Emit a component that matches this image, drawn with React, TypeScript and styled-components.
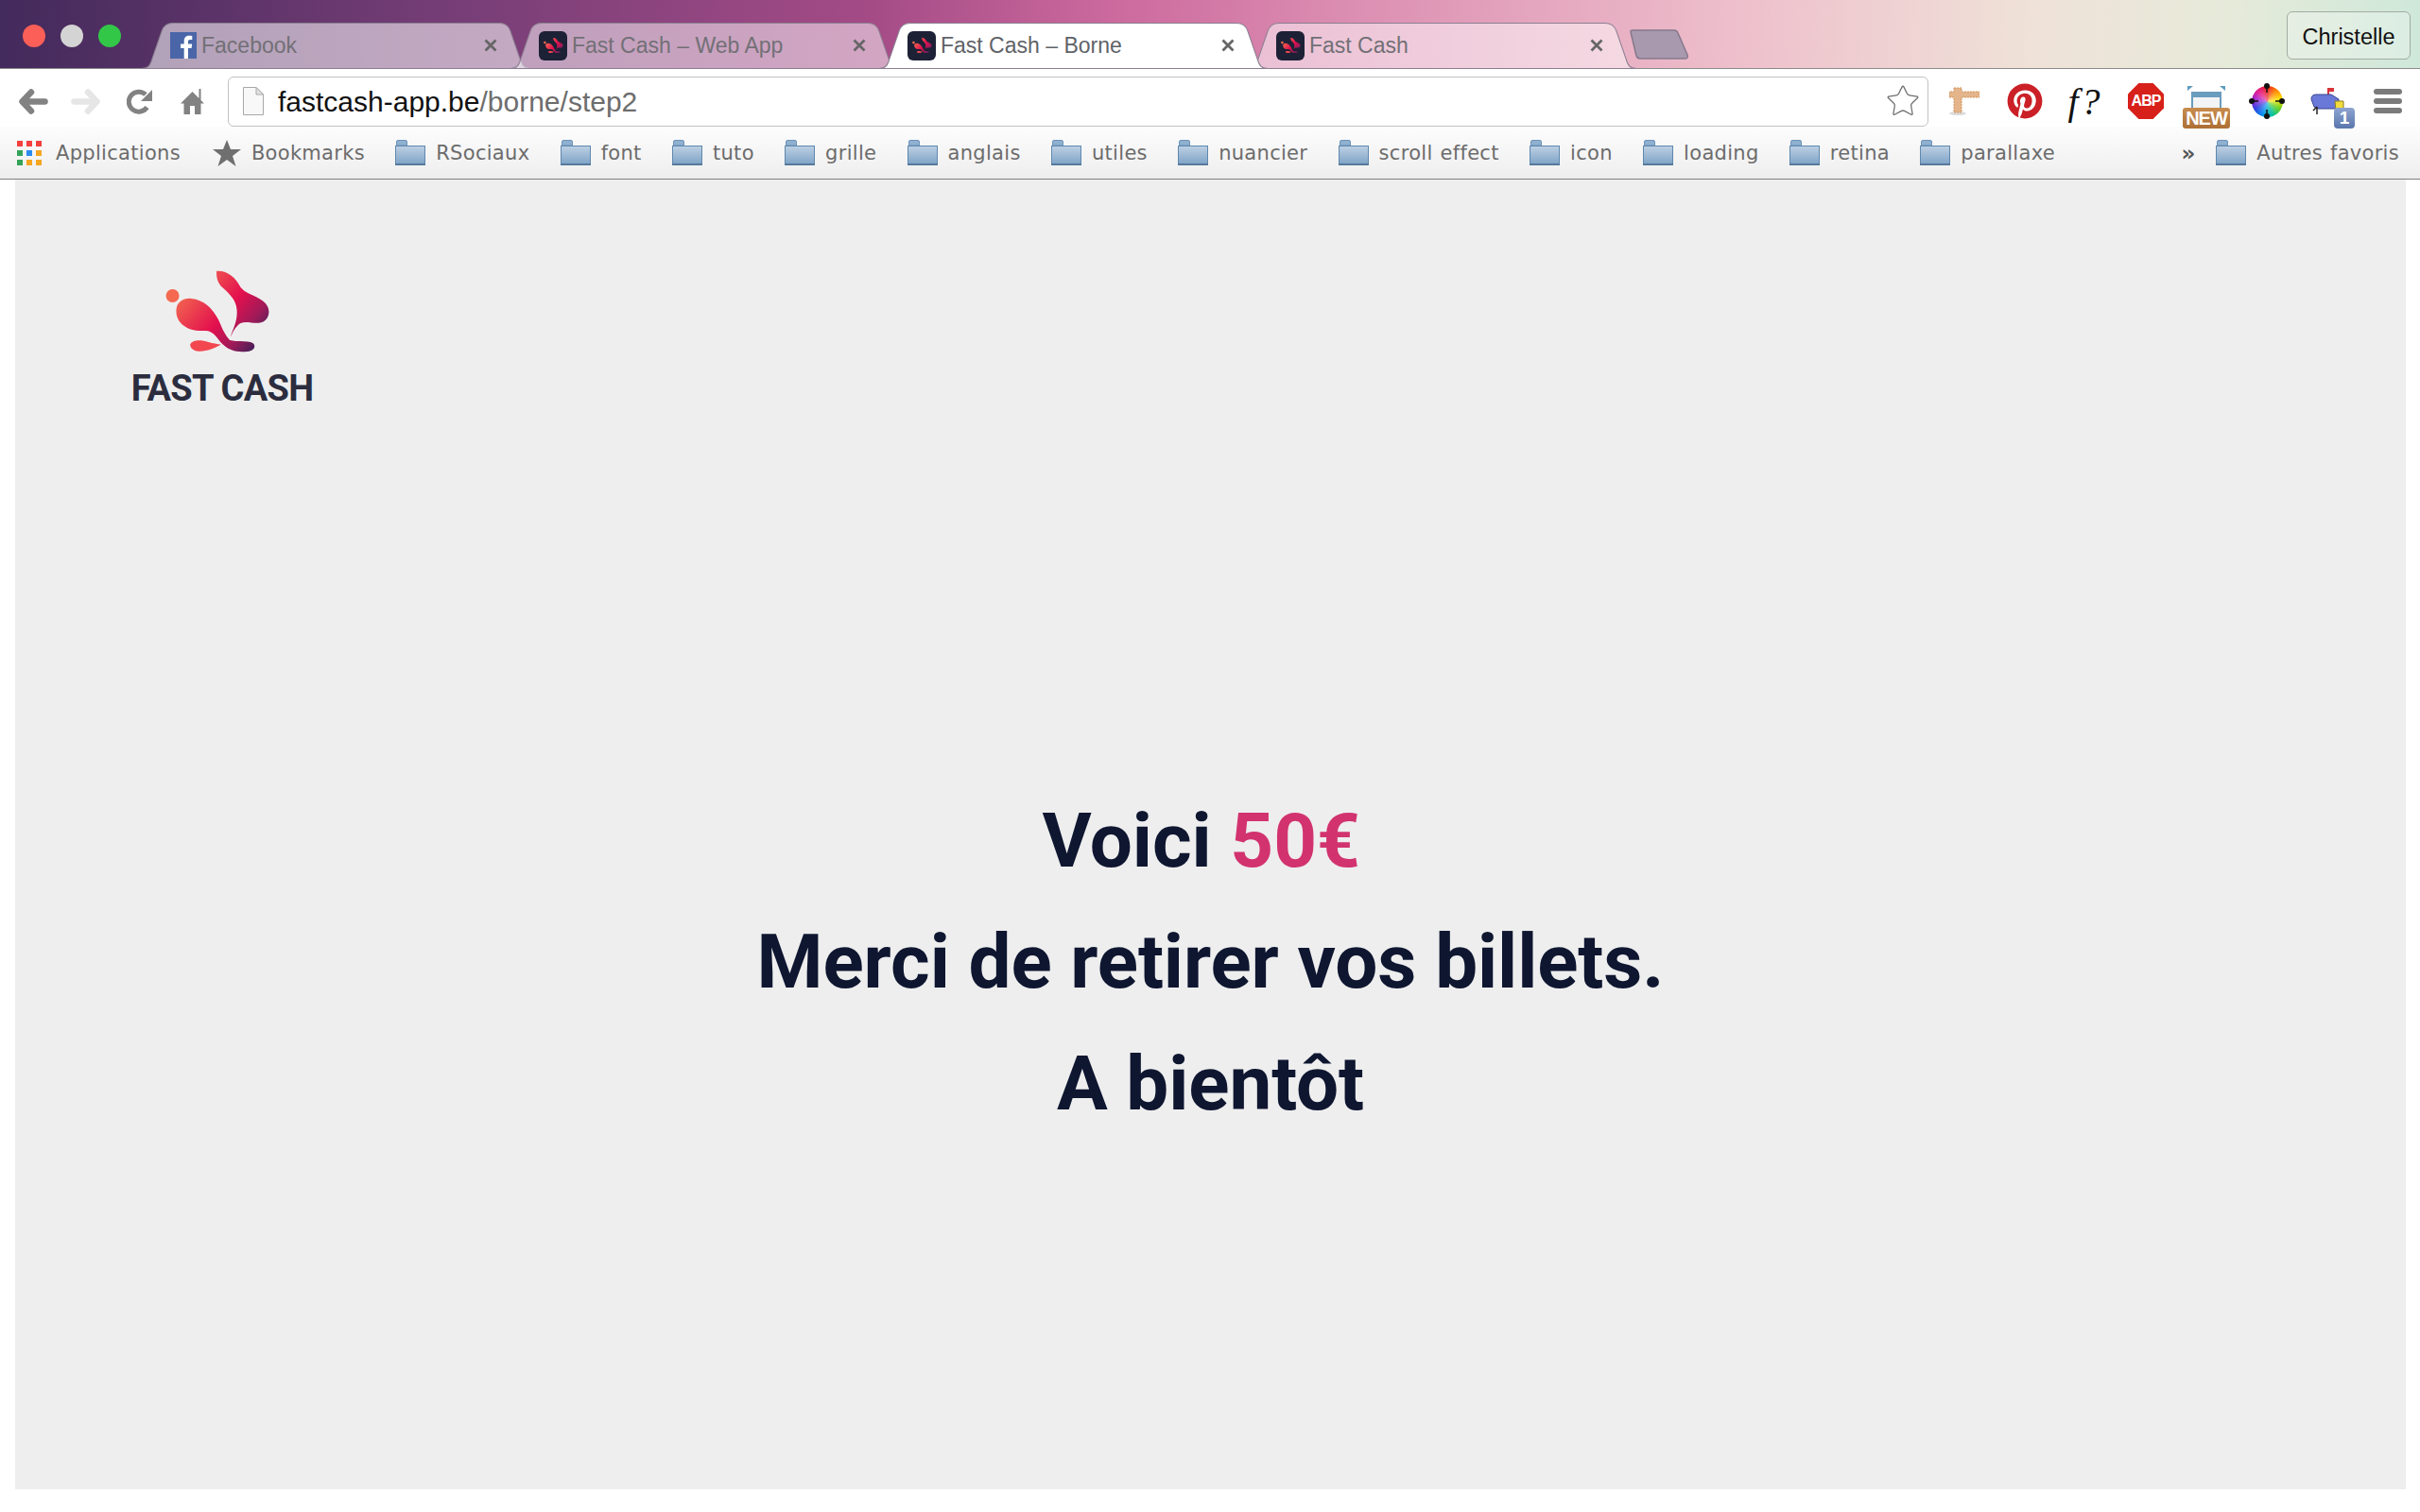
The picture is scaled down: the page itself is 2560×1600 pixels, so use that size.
import { useId } from "react";
import styled, { createGlobalStyle } from "styled-components";
import { FaPinterest } from "react-icons/fa";
import { Star } from "lucide-react";

const GlobalStyle = createGlobalStyle`
  html, body { margin: 0; padding: 0; background: #ffffff; }
  * { box-sizing: border-box; }
`;

const Window = styled.div`
  display: flex;
  flex-direction: column;
  width: 2560px;
  height: 1600px;
  background: #ffffff;
  overflow: hidden;
`;

const TabBar = styled.div`
  display: flex;
  align-items: flex-end;
  height: 73px;
  flex-shrink: 0;
  border-bottom: 1px solid #8c8a8c;
  background: linear-gradient(93deg, #432a5c 0%, #7a3f78 20%, #a44b86 36%, #cc6a9e 46%, #dc8fb2 56%, #eec0cc 72%, #efe2d8 84%, #e6ead9 92%, #cee8da 100%);
`;

const Lights = styled.div`
  display: flex;
  gap: 16px;
  align-self: flex-start;
  margin: 26px 22px 0 24px;
`;

const Light = styled.span<{ $color: string }>`
  width: 24px;
  height: 24px;
  border-radius: 50%;
  background: ${(p) => p.$color};
`;

const Tab = styled.div<{ $active?: boolean }>`
  position: relative;
  display: flex;
  align-items: center;
  width: 411px;
  height: 49px;
  margin-right: -21px;
  margin-bottom: -1px;
  padding: 0 34px 1px 30px;
  z-index: ${(p) => (p.$active ? 2 : 1)};
`;

const TabShape = styled.svg`
  position: absolute;
  inset: 0;
  width: 100%;
  height: 100%;
`;

const TabFavicon = styled.span`
  position: relative;
  display: flex;
  flex-shrink: 0;
  margin-right: 5px;
`;

const TabTitle = styled.span<{ $active?: boolean }>`
  position: relative;
  flex: 1;
  font-family: "Liberation Sans", sans-serif;
  font-size: 23px;
  color: ${(p) => (p.$active ? "#5f6368" : "#727076")};
`;

const TabClose = styled.svg`
  position: relative;
  flex-shrink: 0;
  width: 16px;
  height: 16px;
`;

const FaviconBox = styled.span`
  display: flex;
  align-items: center;
  justify-content: center;
  width: 30px;
  height: 31px;
  border-radius: 6px;
  background: #1d2136;
`;

const NewTab = styled.svg`
  width: 64px;
  height: 32px;
  margin: 0 0 9px 13px;
`;

const ProfileButton = styled.div`
  align-self: flex-start;
  display: flex;
  align-items: center;
  justify-content: center;
  width: 131px;
  height: 51px;
  margin: 12px 10px 0 auto;
  padding-top: 3px;
  border: 1px solid #a2aca4;
  border-radius: 6px;
  background: rgba(255, 255, 255, 0.25);
  font-family: "Liberation Sans", sans-serif;
  font-size: 23.5px;
  color: #111111;
`;

const Toolbar = styled.div`
  display: flex;
  align-items: center;
  height: 61px;
  flex-shrink: 0;
  padding: 7px 0 0 20px;
  background: #ffffff;
`;

const NavIcon = styled.svg<{ $gap: number }>`
  flex-shrink: 0;
  margin-right: ${(p) => p.$gap}px;
`;

const Omnibox = styled.div`
  display: flex;
  align-items: center;
  width: 1799px;
  height: 53px;
  padding: 0 7px 0 15px;
  border: 1.5px solid #c2c2c2;
  border-radius: 6px;
  background: #ffffff;
`;

const Address = styled.div`
  flex: 1;
  margin-left: 15px;
  padding-top: 2px;
  font-family: "Liberation Sans", sans-serif;
  font-size: 30px;
  color: #111111;
`;

const AddressPath = styled.span`
  color: #6d6d6d;
`;

const Extensions = styled.div`
  display: flex;
  margin-left: 6px;
`;

const ExtSlot = styled.div`
  position: relative;
  display: flex;
  align-items: center;
  justify-content: center;
  width: 64px;
  height: 50px;
`;

const FormulaIcon = styled.span`
  font-family: "Liberation Serif", serif;
  font-style: italic;
  font-size: 40px;
  letter-spacing: 3px;
  color: #111111;
`;

const AbpOctagon = styled.div`
  display: flex;
  align-items: center;
  justify-content: center;
  width: 38px;
  height: 38px;
  background: #d7201a;
  clip-path: polygon(30% 0, 70% 0, 100% 30%, 100% 70%, 70% 100%, 30% 100%, 0 70%, 0 30%);
  font-family: "Liberation Sans", sans-serif;
  font-weight: 700;
  font-size: 16px;
  letter-spacing: -1px;
  color: #ffffff;
`;

const NewBadge = styled.span`
  position: absolute;
  left: 7px;
  top: 32px;
  width: 50px;
  height: 22px;
  border-radius: 3px;
  background: linear-gradient(#c88c4e, #ad6f35);
  font-family: "Liberation Sans", sans-serif;
  font-weight: 700;
  font-size: 20px;
  letter-spacing: -1px;
  line-height: 22px;
  text-align: center;
  color: #ffffff;
`;

const Wheel = styled.div`
  position: relative;
  width: 33px;
  height: 33px;
  border-radius: 50%;
  background: radial-gradient(rgba(255, 255, 255, 0.45), rgba(255, 255, 255, 0) 65%),
    conic-gradient(#e81c1c, #ff8a00, #ffe600, #66d020, #00c0a0, #0090f0, #3040e0, #a020d0, #e81c8c, #e81c1c);
`;

const WheelTicks = styled.svg`
  position: absolute;
  left: -3.5px;
  top: -3.5px;
`;

const CountBadge = styled.span`
  position: absolute;
  left: 39px;
  top: 32px;
  width: 22px;
  height: 22px;
  border-radius: 4px;
  background: linear-gradient(#8ea4d0, #5a76ac);
  font-family: "Liberation Sans", sans-serif;
  font-weight: 700;
  font-size: 19px;
  line-height: 22px;
  text-align: center;
  color: #ffffff;
`;

const Burger = styled.div`
  display: flex;
  flex-direction: column;
  gap: 4px;
  width: 30px;
`;

const BurgerBar = styled.span`
  height: 6px;
  border-radius: 3px;
  background: #7b7b7b;
`;

const BookmarkBar = styled.div`
  display: flex;
  align-items: center;
  height: 56px;
  flex-shrink: 0;
  padding: 0 22px 0 18px;
  border-bottom: 1.5px solid #7f7f7f;
  background: linear-gradient(#fdfdfd, #eeeeee);
`;

const Bookmark = styled.div<{ $gap?: number }>`
  display: flex;
  align-items: center;
  gap: 11px;
  margin-right: ${(p) => p.$gap ?? 32.3}px;
`;

const BookmarkLabel = styled.span`
  font-family: "DejaVu Sans", sans-serif;
  font-size: 21px;
  letter-spacing: 0.3px;
  word-spacing: 1px;
  color: #6c6c6c;
  white-space: nowrap;
`;

const AppGrid = styled.div`
  display: grid;
  grid-template-columns: repeat(3, 6px);
  grid-auto-rows: 6px;
  gap: 4px;
  margin-right: 4px;
`;

const AppCell = styled.span<{ $color: string }>`
  background: ${(p) => p.$color};
`;

const Chevron = styled.span`
  margin-left: auto;
  margin-right: 22px;
  font-family: "DejaVu Sans", sans-serif;
  font-weight: 700;
  font-size: 23px;
  color: #555555;
`;

const Page = styled.main`
  flex: 1;
  display: flex;
  flex-direction: column;
  margin: 0 15px 24px 16px;
  padding: 96px 0 0 122px;
  background: #eeeeee;
`;

const Logo = styled.div`
  display: flex;
  flex-direction: column;
  align-items: center;
  width: 194px;
`;

const LogoMark = styled.div`
  display: flex;
  margin-right: 10px;
`;

const LogoText = styled.div`
  margin-top: 22px;
  font-family: Roboto, sans-serif;
  font-weight: 700;
  font-size: 38px;
  line-height: 32px;
  letter-spacing: -0.7px;
  white-space: nowrap;
  color: #2b2d3f;
`;

const Message = styled.div`
  margin: 399px 0 0 -122px;
  text-align: center;
  font-family: Roboto, sans-serif;
  font-weight: 700;
  font-size: 80px;
  line-height: 128.5px;
  letter-spacing: -0.1px;
  color: #0e1630;
`;

const Amount = styled.span`
  color: #d2336f;
`;

const Bunny = ({ size }: { size: number }) => {
  const id = useId();
  return (
    <svg width={size} height={size * 0.78} viewBox="190 76 332 260">
      <defs>
        <linearGradient id={id} gradientUnits="userSpaceOnUse" x1="230" y1="110" x2="480" y2="320">
          <stop offset="0" stopColor="#f57a50" />
          <stop offset="0.55" stopColor="#e3104e" />
          <stop offset="0.8" stopColor="#a01a58" />
          <stop offset="1" stopColor="#43205a" />
        </linearGradient>
      </defs>
      <circle cx="212" cy="157" r="21" fill="#f4694f" />
      <path
        fill={`url(#${id})`}
        d="M224 200C226 176 248 163 272 166C312 170 340 198 358 234C368 256 376 280 394 298C418 304 452 298 468 308C478 318 470 332 450 334C420 338 392 332 372 312C352 292 344 266 312 268C264 272 220 246 224 200Z"
      />
      <path
        fill={`url(#${id})`}
        d="M352 78C388 76 412 100 426 126C438 150 474 154 500 174C524 192 524 226 500 240C478 250 450 236 428 244C412 254 404 272 396 288C404 260 420 236 416 200C414 170 392 150 370 130C356 118 350 98 352 78Z"
      />
      <path fill="#f2474f" d="M268 312C274 298 300 296 326 304C340 308 354 310 366 312C344 326 316 336 290 333C276 331 268 322 268 312Z" />
    </svg>
  );
};

const Favicon = () => (
  <FaviconBox>
    <Bunny size={21} />
  </FaviconBox>
);

const FacebookIcon = () => (
  <svg width="28" height="28" viewBox="0 0 28 28">
    <rect width="28" height="28" fill="#4a66a8" />
    <path fill="#ffffff" d="M19 28V17h3.6l.6-4.4H19V10c0-1.3.4-2.100 2.200-2.100h2.100V4c-.4 0-1.700-.2-3.200-.2-3.200 0-5.400 2-5.400 5.500v3.300H11V17h3.700v11z" />
  </svg>
);

const Folder = () => (
  <svg width="32" height="27" viewBox="0 0 32 27">
    <defs>
      <linearGradient id="folderFill" x1="0" y1="0" x2="0" y2="1">
        <stop offset="0" stopColor="#bdd0e4" />
        <stop offset="1" stopColor="#7ea3c6" />
      </linearGradient>
    </defs>
    <path fill="#8fb0cf" stroke="#6d93b8" d="M1.500 6V2q0-1.500 1.500-1.500h8q1.500 0 1.500 1.500v4z" />
    <rect x="0.500" y="6.500" width="31" height="19.500" fill="url(#folderFill)" stroke="#5f88ae" />
    <rect x="0" y="25" width="32" height="2" fill="#56799c" />
  </svg>
);

const TabBackground = ({ fill }: { fill: string }) => (
  <TabShape viewBox="0 0 410 49" preserveAspectRatio="none">
    <path
      d="M0 48.500C7 48.500 9 45 11 38L21 9C23 3 27 .5 33 .5H377C383 .5 387 3 389 9L399 38C401 45 403 48.500 410 48.500Z"
      fill={fill}
      stroke="#8c7f92"
      strokeWidth="1"
    />
  </TabShape>
);

const CloseIcon = () => (
  <TabClose viewBox="0 0 16 16">
    <path d="M2.500 2.500L13.500 13.500M13.500 2.500L2.500 13.500" stroke="#666666" strokeWidth="2.800" />
  </TabClose>
);

const tabs = [
  { title: "Facebook", icon: <FacebookIcon />, fill: "rgba(255,255,255,0.55)" },
  { title: "Fast Cash – Web App", icon: <Favicon />, fill: "rgba(255,255,255,0.5)" },
  { title: "Fast Cash – Borne", icon: <Favicon />, fill: "#ffffff", active: true },
  { title: "Fast Cash", icon: <Favicon />, fill: "rgba(255,255,255,0.5)" },
];

const folders = ["RSociaux", "font", "tuto", "grille", "anglais", "utiles", "nuancier", "scroll effect", "icon", "loading", "retina", "parallaxe"];

const appColors = ["#f43f3f", "#f43f3f", "#f43f3f", "#34a35a", "#2b8cf0", "#f5a623", "#34a35a", "#f5a623", "#f5a623"];

export default function App() {
  return (
    <Window>
      <GlobalStyle />
      <TabBar>
        <Lights>
          <Light $color="#fc5f57" />
          <Light $color="#d4d4d4" />
          <Light $color="#33c748" />
        </Lights>
        {tabs.map((tab) => (
          <Tab key={tab.title} $active={tab.active}>
            <TabBackground fill={tab.fill} />
            <TabFavicon>{tab.icon}</TabFavicon>
            <TabTitle $active={tab.active}>{tab.title}</TabTitle>
            <CloseIcon />
          </Tab>
        ))}
        <NewTab viewBox="0 0 64 32">
          <path d="M2 3Q1.500 1 4 1H48Q51 1 52 4L62 27Q63 31 60 31H12Q9 31 8 28Z" fill="#a899ae" stroke="#85798c" strokeWidth="1.500" />
        </NewTab>
        <ProfileButton>Christelle</ProfileButton>
      </TabBar>

      <Toolbar>
        <NavIcon $gap={24} width="31" height="27" viewBox="0 0 31 27">
          <path d="M13 3.500L3.500 13.500L13 23.500M4 13.500H27.500" fill="none" stroke="#828282" strokeWidth="6.500" strokeLinecap="round" strokeLinejoin="round" />
        </NavIcon>
        <NavIcon $gap={28} width="31" height="27" viewBox="0 0 31 27">
          <path d="M18 3.500L27.500 13.500L18 23.500M27 13.500H3.500" fill="none" stroke="#e6e6e6" strokeWidth="6.500" strokeLinecap="round" strokeLinejoin="round" />
        </NavIcon>
        <NavIcon $gap={30} width="27" height="27" viewBox="0 0 27 27">
          <path d="M21.500 19.500A10.500 10.500 0 1 1 20 6" fill="none" stroke="#828282" strokeWidth="5" />
          <path d="M27 1V13H15Z" fill="#828282" />
        </NavIcon>
        <NavIcon $gap={25} width="25" height="27" viewBox="0 0 25 27">
          <path fill="#828282" d="M12.500 3L0 15.500H3.500V27H10V18H15V27H21.500V15.500H25L21.500 12V0H19.500V10Z" />
        </NavIcon>
        <Omnibox>
          <svg width="22" height="30" viewBox="0 0 22 30">
            <path d="M.5.5H14L21.500 8V29.500H.5Z" fill="#f8f8f8" stroke="#a8a8a8" />
            <path d="M14 .5V8H21.500Z" fill="#e4e4e4" stroke="#a8a8a8" />
          </svg>
          <Address>
            fastcash-app.be<AddressPath>/borne/step2</AddressPath>
          </Address>
          <Star size={38} strokeWidth={0.8} color="#6e6e6e" />
        </Omnibox>
        <Extensions>
          <ExtSlot>
            <svg width="32" height="30" viewBox="0 0 32 30">
              <ellipse cx="9" cy="28" rx="9" ry="2" fill="#dcdcdc" />
              <path d="M5 1H13V5H32V11H13V27H5V11H0V5H5Z" fill="#e4b48a" stroke="#cf9862" strokeDasharray="2 1" />
            </svg>
          </ExtSlot>
          <ExtSlot>
            <FaPinterest size={38} color="#cb2027" />
          </ExtSlot>
          <ExtSlot>
            <FormulaIcon>f?</FormulaIcon>
          </ExtSlot>
          <ExtSlot>
            <AbpOctagon>ABP</AbpOctagon>
          </ExtSlot>
          <ExtSlot>
            <svg width="40" height="32" viewBox="0 0 40 32">
              <path d="M0 0H6L0 5ZM40 0H34L40 5Z" fill="#5f9bc0" />
              <rect x="5" y="7" width="30" height="25" fill="#f2f4f6" stroke="#6a9cbd" strokeWidth="2" />
              <rect x="4" y="6" width="32" height="6" rx="2" fill="#6a9cbd" />
            </svg>
            <NewBadge>NEW</NewBadge>
          </ExtSlot>
          <ExtSlot>
            <Wheel>
              <WheelTicks width="40" height="40" viewBox="0 0 40 40">
                <path d="M20 3V11M20 29V37M3 20H11M29 20H37" stroke="#111111" strokeWidth="1.500" />
                <circle cx="20" cy="4" r="3" fill="#111111" />
                <circle cx="20" cy="36" r="3" fill="#111111" />
                <circle cx="4" cy="20" r="3" fill="#111111" />
                <circle cx="36" cy="20" r="3" fill="#111111" />
              </WheelTicks>
            </Wheel>
          </ExtSlot>
          <ExtSlot>
            <svg width="36" height="28" viewBox="0 0 36 28">
              <path d="M18 0H25V4H20V10H18Z" fill="#d8333a" />
              <path d="M1 12Q1 7 6 7H22L30 12V22L8 22L4 20Z" fill="#6a78d8" stroke="#3a4490" />
              <path d="M26 14H35V24H27Z" fill="#f2dc3c" stroke="#8a7c20" />
              <path d="M7 20V28M7 20L3 24" stroke="#222222" strokeWidth="1.500" />
            </svg>
            <CountBadge>1</CountBadge>
          </ExtSlot>
          <ExtSlot>
            <Burger>
              <BurgerBar />
              <BurgerBar />
              <BurgerBar />
            </Burger>
          </ExtSlot>
        </Extensions>
      </Toolbar>

      <BookmarkBar>
        <Bookmark $gap={34}>
          <AppGrid>
            {appColors.map((color, i) => (
              <AppCell key={i} $color={color} />
            ))}
          </AppGrid>
          <BookmarkLabel>Applications</BookmarkLabel>
        </Bookmark>
        <Bookmark>
          <svg width="30" height="28" viewBox="0 0 30 28">
            <path fill="#6f6f6f" d="M15 0L19 10H30L21 17L24.500 28L15 21L5.500 28L9 17L0 10H11Z" />
          </svg>
          <BookmarkLabel>Bookmarks</BookmarkLabel>
        </Bookmark>
        {folders.map((name) => (
          <Bookmark key={name}>
            <Folder />
            <BookmarkLabel>{name}</BookmarkLabel>
          </Bookmark>
        ))}
        <Chevron>»</Chevron>
        <Bookmark $gap={0}>
          <Folder />
          <BookmarkLabel>Autres favoris</BookmarkLabel>
        </Bookmark>
      </BookmarkBar>

      <Page>
        <Logo>
          <LogoMark>
            <Bunny size={111} />
          </LogoMark>
          <LogoText>FAST CASH</LogoText>
        </Logo>
        <Message>
          Voici <Amount>50€</Amount>
          {"\u00a0"}
          <br />
          Merci de retirer vos billets.
          <br />A bientôt
        </Message>
      </Page>
    </Window>
  );
}
